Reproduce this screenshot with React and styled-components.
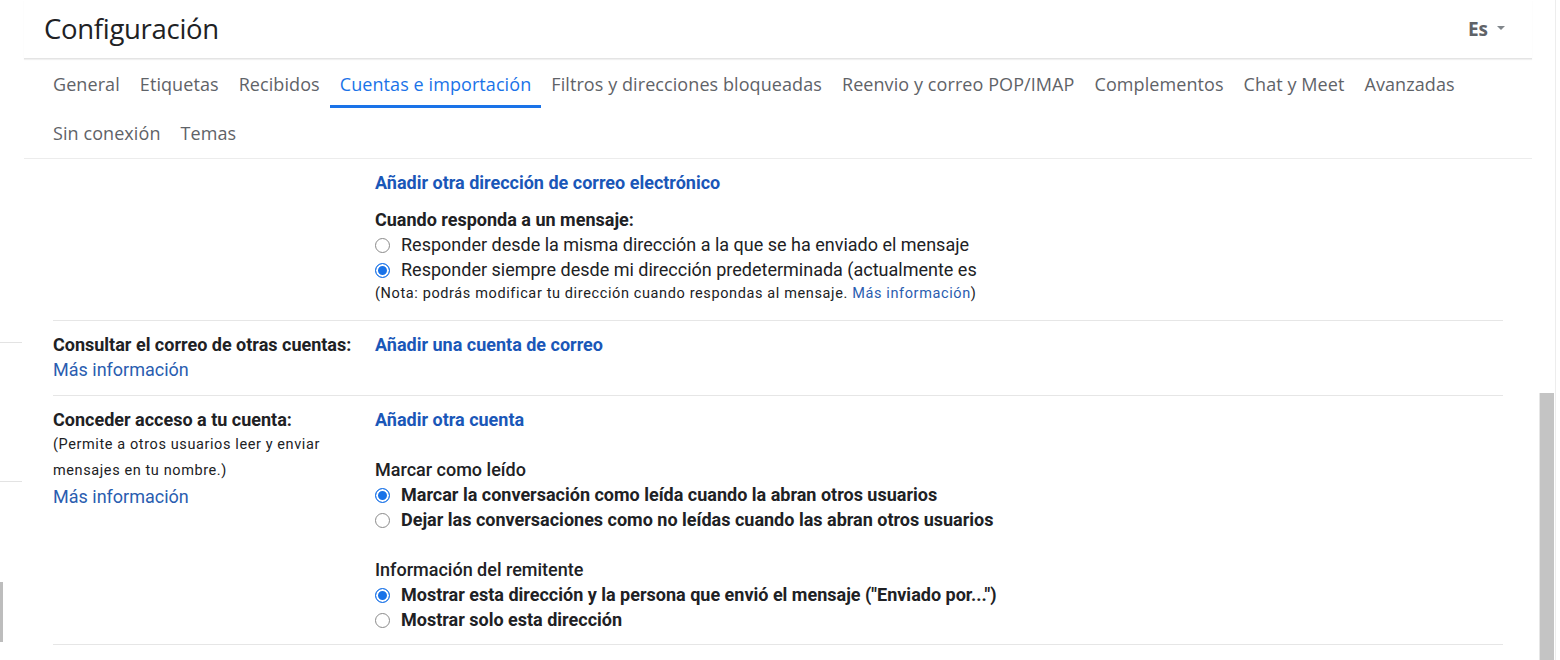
import React from "react";
import styled, { createGlobalStyle } from "styled-components";

const Global = createGlobalStyle`
  html, body { margin: 0; padding: 0; background: #fff; }
  body { font-family: Roboto, "Liberation Sans", sans-serif; color: #202124; overflow: hidden; }
`;

const Page = styled.div`
  display: flex;
  width: 1560px;
  height: 660px;
  overflow: hidden;
`;

const Gutter = styled.div`
  width: 24px;
  flex: none;
  display: flex;
  flex-direction: column;
`;

const GutterRule = styled.div`
  width: 22px;
  height: 1px;
  background: #e3e3e3;
  margin-top: ${(p) => p.$top}px;
`;

const GutterBar = styled.div`
  width: 3px;
  height: 60px;
  background: #bdbdbd;
  margin-top: ${(p) => p.$top}px;
`;

const Main = styled.div`
  width: 1508px;
  flex: none;
  display: flex;
  flex-direction: column;
`;

const Header = styled.header`
  height: 58px;
  display: flex;
  align-items: center;
  justify-content: space-between;
  padding: 0 27px 0 20px;
  border-bottom: 1px solid #e4e4e4;
  box-shadow: 0 1px 1px rgba(0, 0, 0, 0.06);
`;

const Title = styled.h1`
  margin: 0;
  font-family: "Open Sans", Roboto, sans-serif;
  font-weight: 400;
  font-size: 27.5px;
  letter-spacing: -0.3px;
  color: #202124;
  padding-bottom: 2px;
`;

const Lang = styled.div`
  display: flex;
  align-items: center;
  gap: 9px;
  font-family: "Open Sans", Roboto, sans-serif;
  font-weight: 700;
  font-size: 19px;
  color: #5f6368;
`;

const Caret = styled.span`
  width: 0;
  height: 0;
  border-left: 4px solid transparent;
  border-right: 4px solid transparent;
  border-top: 4px solid #80868b;
  margin-top: -3px;
`;

const Tabs = styled.nav`
  display: flex;
  flex-direction: column;
  padding: 0 0 1px 19px;
  border-bottom: 1px solid #ececec;
`;

const TabRow = styled.div`
  display: flex;
`;

const Tab = styled.a`
  height: 49px;
  box-sizing: border-box;
  padding: 0 10px;
  display: flex;
  align-items: center;
  font-family: "Open Sans", Roboto, sans-serif;
  font-size: 18px;
  letter-spacing: 0.08px;
  color: ${(p) => (p.$active ? "#1a73e8" : "#5f6368")};
  border-bottom: 3px solid ${(p) => (p.$active ? "#1a73e8" : "transparent")};
  border-top: 3px solid transparent;
  white-space: nowrap;
  cursor: pointer;
`;

const Content = styled.div`
  padding: 0 29px;
  display: flex;
  flex-direction: column;
`;

const Section = styled.div`
  display: grid;
  grid-template-columns: 322px 1fr;
  padding: ${(p) => p.$pt ?? 11}px 0 ${(p) => p.$pb ?? 13}px;
  border-bottom: 1px solid #e6e6e6;
`;

const Col = styled.div`
  display: flex;
  flex-direction: column;
`;

const Label = styled.div`
  font-weight: 700;
  font-size: 18px;
  line-height: 25px;
  color: #202124;
`;

const Small = styled.div`
  font-size: 14.5px;
  line-height: 26px;
  letter-spacing: 0.6px;
  color: #202124;
`;

const Link = styled.a`
  color: ${(p) => (p.$bold ? "#1a57b8" : "#2a5db0")};
  font-weight: ${(p) => (p.$bold ? 700 : 400)};
  font-size: 18px;
  line-height: 25px;
  text-decoration: none;
  cursor: pointer;
`;

const InlineLink = styled.a`
  color: #2a5db0;
  text-decoration: none;
`;

const Heading = styled.div`
  font-size: 18px;
  line-height: 25px;
  font-weight: ${(p) => (p.$bold ? 700 : 500)};
  color: #202124;
  margin-top: ${(p) => p.$mt ?? 0}px;
`;

const Option = styled.label`
  display: flex;
  align-items: center;
  gap: 11px;
  font-size: 18px;
  line-height: 25px;
  font-weight: ${(p) => (p.$bold ? 700 : 400)};
  color: #202124;
`;

const Radio = styled.span`
  width: 15px;
  height: 15px;
  box-sizing: border-box;
  border-radius: 50%;
  flex: none;
  border: 1px solid ${(p) => (p.$checked ? "#1a73e8" : "#8a8a8a")};
  background: ${(p) => (p.$checked ? "#1a73e8" : "#fff")};
  box-shadow: ${(p) => (p.$checked ? "inset 0 0 0 2px #fff" : "none")};
  margin-top: 1px;
`;

const Note = styled.div`
  font-size: 14.5px;
  line-height: 24px;
  letter-spacing: 0.62px;
  color: #202124;
`;

const Scrollbar = styled.div`
  width: 16px;
  flex: none;
  margin-left: 7px;
  display: flex;
  flex-direction: column;
  border-right: 1px solid #ededed;
`;

const Thumb = styled.div`
  width: 14px;
  margin-top: 393px;
  flex: 1;
  background: #c4c4c4;
  border-left: 1px solid #e6e6e6;
`;

const RadioOption = ({ checked, bold, children }) => (
  <Option $bold={bold}>
    <Radio $checked={checked} />
    {children}
  </Option>
);

export default function App() {
  const row1 = [
    "General",
    "Etiquetas",
    "Recibidos",
    "Cuentas e importación",
    "Filtros y direcciones bloqueadas",
    "Reenvio y correo POP/IMAP",
    "Complementos",
    "Chat y Meet",
    "Avanzadas",
  ];
  const row2 = ["Sin conexión", "Temas"];
  return (
    <>
      <Global />
      <Page>
        <Gutter>
          <GutterRule $top={342} />
          <GutterRule $top={138} />
          <GutterBar $top={100} />
        </Gutter>
        <Main>
          <Header>
            <Title>Configuración</Title>
            <Lang>
              Es <Caret />
            </Lang>
          </Header>
          <Tabs>
            <TabRow>
              {row1.map((t) => (
                <Tab key={t} $active={t === "Cuentas e importación"}>
                  {t}
                </Tab>
              ))}
            </TabRow>
            <TabRow>
              {row2.map((t) => (
                <Tab key={t}>{t}</Tab>
              ))}
            </TabRow>
          </Tabs>
          <Content>
            <Section $pt={11} $pb={14}>
              <Col />
              <Col>
                <Link $bold>Añadir otra dirección de correo electrónico</Link>
                <Heading $bold $mt={12}>Cuando responda a un mensaje:</Heading>
                <RadioOption>Responder desde la misma dirección a la que se ha enviado el mensaje</RadioOption>
                <RadioOption checked>
                  Responder siempre desde mi dirección predeterminada (actualmente es
                </RadioOption>
                <Note>
                  (Nota: podrás modificar tu dirección cuando respondas al mensaje.{" "}
                  <InlineLink>Más información</InlineLink>)
                </Note>
              </Col>
            </Section>
            <Section>
              <Col>
                <Label>Consultar el correo de otras cuentas:</Label>
                <Link>Más información</Link>
              </Col>
              <Col>
                <Link $bold>Añadir una cuenta de correo</Link>
              </Col>
            </Section>
            <Section $pb={12}>
              <Col>
                <Label>Conceder acceso a tu cuenta:</Label>
                <Small>(Permite a otros usuarios leer y enviar</Small>
                <Small>mensajes en tu nombre.)</Small>
                <Link>Más información</Link>
              </Col>
              <Col>
                <Link $bold>Añadir otra cuenta</Link>
                <Heading $mt={25}>Marcar como leído</Heading>
                <RadioOption checked bold>
                  Marcar la conversación como leída cuando la abran otros usuarios
                </RadioOption>
                <RadioOption bold>
                  Dejar las conversaciones como no leídas cuando las abran otros usuarios
                </RadioOption>
                <Heading $mt={25}>Información del remitente</Heading>
                <RadioOption checked bold>
                  Mostrar esta dirección y la persona que envió el mensaje ("Enviado por...")
                </RadioOption>
                <RadioOption bold>Mostrar solo esta dirección</RadioOption>
              </Col>
            </Section>
          </Content>
        </Main>
        <Scrollbar>
          <Thumb />
        </Scrollbar>
      </Page>
    </>
  );
}
